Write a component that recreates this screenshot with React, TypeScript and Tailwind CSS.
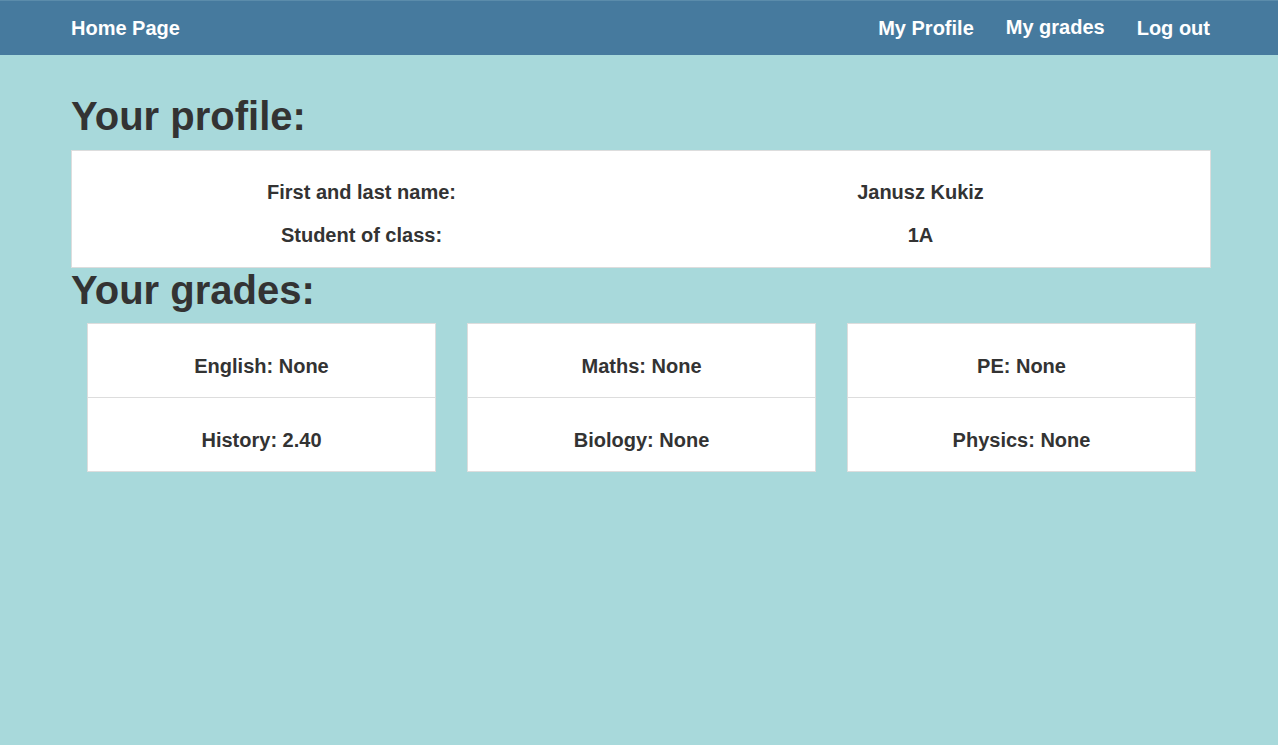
const grades = [
  [
    { subject: 'English', value: 'None' },
    { subject: 'History', value: '2.40' },
  ],
  [
    { subject: 'Maths', value: 'None' },
    { subject: 'Biology', value: 'None' },
  ],
  [
    { subject: 'PE', value: 'None' },
    { subject: 'Physics', value: 'None' },
  ],
];

export default function App() {
  return (
    <div
      className="min-h-[745px] bg-[#a8d9db] text-[#333]"
      style={{ fontFamily: '"Liberation Sans", Arial, sans-serif' }}
    >
      {/* Navbar */}
      <nav className="h-[55px] border-t border-[#5b8cab] bg-[#467a9e] text-white">
        <div className="ml-[71px] flex h-full w-[1140px] items-center justify-between pr-[1px] text-[20px] font-bold leading-[23px]">
          <a href="#">Home Page</a>
          <div className="flex items-center gap-[32px]">
            <a href="#">My Profile</a>
            <a href="#" className="pb-[2px]">My grades</a>
            <a href="#">Log out</a>
          </div>
        </div>
      </nav>

      <main className="ml-[71px] w-[1140px]">
        <h1 className="mt-[41px] mb-[14px] text-[40px] font-bold leading-none">Your profile:</h1>

        {/* Profile table */}
        <div className="border border-[#dddddd] bg-white px-[10px] pt-[20px] pb-[10px] text-[20px] font-bold leading-[23px]">
          <div className="grid h-[43px] grid-cols-2 items-center text-center">
            <span>First and last name:</span>
            <span>Janusz Kukiz</span>
          </div>
          <div className="grid h-[43px] grid-cols-2 items-center text-center">
            <span>Student of class:</span>
            <span>1A</span>
          </div>
        </div>

        <h1 className="mt-[2px] mb-[13px] text-[40px] font-bold leading-none">Your grades:</h1>

        {/* Grade cards */}
        <div className="grid grid-cols-[349px_349px_349px] gap-[31px] pl-[16px]">
          {grades.map((col, i) => (
            <div key={i} className="border border-[#dddddd] bg-white">
              {col.map((g, j) => (
                <div
                  key={g.subject}
                  className={`pt-[31px] text-center text-[20px] font-bold leading-[23px] ${
                    j === 0 ? 'h-[74px] border-b border-[#dddddd]' : 'h-[73px]'
                  }`}
                >
                  {g.subject}: {g.value}
                </div>
              ))}
            </div>
          ))}
        </div>
      </main>
    </div>
  );
}
